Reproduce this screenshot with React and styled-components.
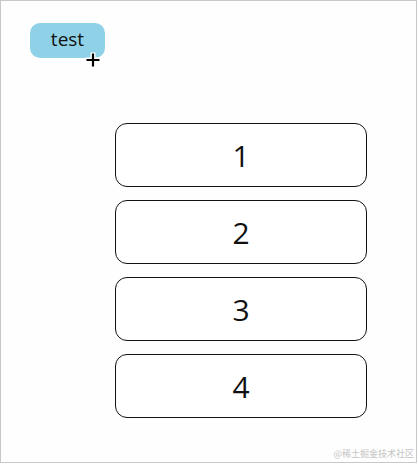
import React from "react";
import styled, { createGlobalStyle } from "styled-components";

const Global = createGlobalStyle`
  html, body { margin: 0; padding: 0; background: #fff; }
  body { font-family: "Open Sans", "Noto Sans", sans-serif; }
`;

const Frame = styled.div`
  position: relative;
  box-sizing: border-box;
  width: 417px;
  height: 463px;
  border: 1px solid #c8c8c8;
  background: #fefefe;
  padding: 22px 0 0 29px;
`;

const Tag = styled.div`
  position: relative;
  box-sizing: border-box;
  width: 75px;
  height: 35px;
  background: #8fd1e6;
  border-radius: 10px;
  display: flex;
  align-items: center;
  justify-content: center;
  font-size: 19px;
  color: #111;
  padding-bottom: 4px;
`;

const Cursor = styled.svg`
  position: absolute;
  left: 54px;
  top: 28px;
`;

const List = styled.div`
  display: flex;
  flex-direction: column;
  gap: 13px;
  margin: 65px 0 0 85px;
  width: 252px;
`;

const Item = styled.div`
  box-sizing: border-box;
  height: 64px;
  border: 1px solid #111;
  border-radius: 12px;
  display: flex;
  align-items: center;
  justify-content: center;
  font-size: 30px;
  color: #111;
  background: #fff;
`;

const Watermark = styled.div`
  position: absolute;
  right: 2px;
  bottom: 2px;
  font-family: "Noto Sans CJK SC", sans-serif;
  font-size: 9px;
  color: #c4c4c4;
`;

export default function App() {
  return (
    <>
      <Global />
      <Frame>
        <Tag>
          test
          <Cursor width="18" height="18" viewBox="0 0 18 18">
            <path d="M9 1.5v15M1.5 9h15" stroke="#fff" strokeWidth="5" />
            <path d="M9 2.5v13M2.5 9h13" stroke="#000" strokeWidth="2.2" />
          </Cursor>
        </Tag>
        <List>
          {[1, 2, 3, 4].map((n) => (
            <Item key={n}>{n}</Item>
          ))}
        </List>
        <Watermark>@稀土掘金技术社区</Watermark>
      </Frame>
    </>
  );
}
